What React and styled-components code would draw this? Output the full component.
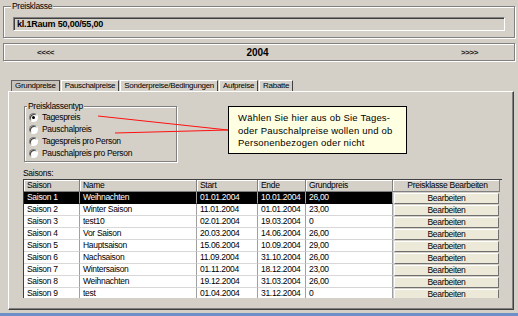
import React from "react";
import styled, { createGlobalStyle } from "styled-components";

const seasons = [
  ["Saison 1", "Weihnachten", "01.01.2004", "10.01.2004", "26,00"],
  ["Saison 2", "Winter Saison", "11.01.2004", "01.01.2004", "23,00"],
  ["Saison 3", "test10", "02.01.2004", "19.03.2004", "0"],
  ["Saison 4", "Vor Saison", "20.03.2004", "14.06.2004", "26,00"],
  ["Saison 5", "Hauptsaison", "15.06.2004", "10.09.2004", "29,00"],
  ["Saison 6", "Nachsaison", "11.09.2004", "31.10.2004", "26,00"],
  ["Saison 7", "Wintersaison", "01.11.2004", "18.12.2004", "23,00"],
  ["Saison 8", "Weihnachten", "19.12.2004", "31.03.2004", "26,00"],
  ["Saison 9", "test", "01.04.2004", "31.12.2004", "0"],
];

const tabs = ["Grundpreise", "Pauschalpreise", "Sonderpreise/Bedingungen", "Aufpreise", "Rabatte"];
const types = ["Tagespreis", "Pauschalpreis", "Tagespreis pro Person", "Pauschalpreis pro Person"];
const columns = ["Saison", "Name", "Start", "Ende", "Grundpreis"];

const App = () => {
  return (
    <Window>
      <GlobalStyle />
      <GroupBox>
        <Legend>Preisklasse</Legend>
        <ReadOnlyField>kl.1Raum 50,00/55,00</ReadOnlyField>
      </GroupBox>

      <YearBar>
        <NavArrow>{"<<<<"}</NavArrow>
        <Year>2004</Year>
        <NavArrow $right>{">>>>"}</NavArrow>
      </YearBar>

      <TabStrip>
        {tabs.map((t, i) => (
          <Tab key={t} $active={i === 0}>{t}</Tab>
        ))}
      </TabStrip>

      <TabPanel>
        <TypeGroup>
          <Legend>Preisklassentyp</Legend>
          {types.map((t, i) => (
            <RadioRow key={t}>
              <Radio $checked={i === 0} />
              {t}
            </RadioRow>
          ))}
        </TypeGroup>

        <SeasonLabel>Saisons:</SeasonLabel>
        <Grid>
          <Row>
            {columns.map((c) => (
              <HeadCell key={c}>{c}</HeadCell>
            ))}
            <HeadCell $center>Preisklasse Bearbeiten</HeadCell>
          </Row>
          {seasons.map((s, i) => (
            <Row key={s[0]}>
              {s.map((v, j) => (
                <Cell key={j} $selected={i === 0}>{v}</Cell>
              ))}
              <ButtonCell>
                <EditButton>Bearbeiten</EditButton>
              </ButtonCell>
            </Row>
          ))}
        </Grid>

        <Pointer viewBox="0 0 505 217">
          <line x1="89" y1="24" x2="219" y2="38" />
          <line x1="106" y1="41" x2="219" y2="38" />
        </Pointer>
        <Tooltip>
          Wählen Sie hier aus ob Sie Tages-
          <br />
          oder Pauschalpreise wollen und ob
          <br />
          Personenbezogen oder nicht
        </Tooltip>
      </TabPanel>

      <Footer />
    </Window>
  );
};

const GlobalStyle = createGlobalStyle`
  html, body {
    margin: 0;
    padding: 0;
    background: #d4d0c8;
  }
  body {
    font-family: "Liberation Sans", Arial, sans-serif;
    font-size: 8.5px;
    letter-spacing: -0.3px;
    color: #000;
  }
`;

const Window = styled.div`
  box-sizing: border-box;
  width: 518px;
  height: 316px;
  padding: 1px 3px 0 3px;
  display: flex;
  flex-direction: column;
  background: #d4d0c8;
  overflow: hidden;
`;

const GroupBox = styled.fieldset`
  margin: 0;
  padding: 6px 9px 6px 9px;
  border: 1px solid #808080;
  box-shadow: inset 1px 1px #fff, 1px 1px #fff;
  min-width: 0;
`;

const Legend = styled.legend`
  padding: 0 1px;
  margin-left: -2px;
  background: #d4d0c8;
  line-height: 10px;
  color: #000;
`;

const ReadOnlyField = styled.div`
  box-sizing: border-box;
  height: 14px;
  padding: 0 3px;
  border: 1px solid;
  border-color: #808080 #fff #fff #808080;
  box-shadow: inset 1px 1px #404040;
  font-size: 9px;
  font-weight: bold;
  line-height: 12px;
  letter-spacing: -0.2px;
`;

const YearBar = styled.div`
  box-sizing: border-box;
  height: 18px;
  margin-top: 5px;
  padding: 0 36px 0 33px;
  display: grid;
  grid-template-columns: 1fr auto 1fr;
  align-items: center;
  border: 1px solid #808080;
  box-shadow: inset 1px 1px #fff, 1px 1px #fff;
`;

const NavArrow = styled.span`
  justify-self: ${(p) => (p.$right ? "end" : "start")};
  font-size: 8px;
  font-weight: bold;
  letter-spacing: -0.4px;
  color: #202020;
`;

const Year = styled.span`
  font-size: 10px;
  font-weight: bold;
  letter-spacing: 0;
`;

const TabStrip = styled.div`
  display: flex;
  gap: 1px;
  margin-top: 19px;
  padding-left: 8px;
  height: 11px;
`;

const Tab = styled.div`
  box-sizing: border-box;
  height: 11px;
  padding: 0 3px;
  line-height: 10px;
  font-size: 8px;
  white-space: nowrap;
  border: 1px solid;
  border-bottom: none;
  border-color: ${(p) => (p.$active ? "#606060 #404040 #fff #606060" : "#fff #404040 #fff #fff")};
  background: ${(p) => (p.$active ? "#c8c4bc" : "#d4d0c8")};
`;

const TabPanel = styled.div`
  position: relative;
  box-sizing: border-box;
  height: 219px;
  margin: 0 1px 0 5px;
  padding: 9px 0 0 14px;
  border: 1px solid;
  border-color: #fff #404040 #404040 #fff;
  box-shadow: inset -1px -1px #808080;
`;

const TypeGroup = styled.fieldset`
  box-sizing: border-box;
  width: 153px;
  margin: 0 0 0 1px;
  padding: 0 0 2px 4px;
  border: 1px solid #808080;
  box-shadow: inset 1px 1px #fff, 1px 1px #fff;
`;

const RadioRow = styled.div`
  display: flex;
  align-items: center;
  gap: 4px;
  height: 12px;
`;

const Radio = styled.span`
  box-sizing: border-box;
  position: relative;
  width: 9px;
  height: 9px;
  border-radius: 50%;
  border: 1px solid;
  border-color: #808080 #fff #fff #808080;
  background: #fff;
  box-shadow: inset 1px 1px #404040;

  &::after {
    content: "";
    display: ${(p) => (p.$checked ? "block" : "none")};
    position: absolute;
    left: 2px;
    top: 2px;
    width: 3px;
    height: 3px;
    border-radius: 50%;
    background: #000;
  }
`;

const SeasonLabel = styled.div`
  margin-top: 6px;
  height: 11px;
  line-height: 10px;
`;

const Grid = styled.div`
  width: 478px;
  height: 118px;
  overflow: hidden;
  border-top: 1px solid #404040;
  border-left: 1px solid #404040;
  background: #d4d0c8;
`;

const Row = styled.div`
  display: grid;
  grid-template-columns: 56px 117px 61px 48px 87px 107px;
  height: 12px;
`;

const HeadCell = styled.div`
  box-sizing: border-box;
  padding-left: 3px;
  line-height: 11px;
  white-space: nowrap;
  text-align: ${(p) => (p.$center ? "center" : "left")};
  border-right: 1px solid #808080;
  border-bottom: 1px solid #808080;
  box-shadow: inset 1px 1px #fff;
`;

const Cell = styled.div`
  box-sizing: border-box;
  padding-left: 3px;
  line-height: 11px;
  white-space: nowrap;
  overflow: hidden;
  background: ${(p) => (p.$selected ? "#000" : "#fff")};
  color: ${(p) => (p.$selected ? "#fff" : "#000")};
  border-right: 1px solid #a0a0a0;
  border-bottom: 1px solid ${(p) => (p.$selected ? "#000" : "#d8d8d8")};
`;

const ButtonCell = styled.div`
  padding: 1px 1px 0 1px;
`;

const EditButton = styled.div`
  box-sizing: border-box;
  height: 11px;
  line-height: 9px;
  text-align: center;
  background: #ece9d8;
  border: 1px solid;
  border-color: #fff #707070 #707070 #fff;
`;

const Pointer = styled.svg`
  position: absolute;
  left: 0;
  top: 0;
  width: 505px;
  height: 217px;
  pointer-events: none;

  line {
    stroke: #ff1010;
    stroke-width: 1;
  }
`;

const Tooltip = styled.div`
  position: absolute;
  left: 219px;
  top: 14px;
  box-sizing: border-box;
  width: 179px;
  height: 48px;
  padding: 5px 0 0 9px;
  background: #ffffe1;
  border: 1px solid #000;
  font-size: 9.5px;
  line-height: 12.5px;
  letter-spacing: 0.2px;
`;

const Footer = styled.div`
  margin: auto -3px 0 -3px;
  height: 3px;
  background: #6d8ec6;
`;

export default App;
